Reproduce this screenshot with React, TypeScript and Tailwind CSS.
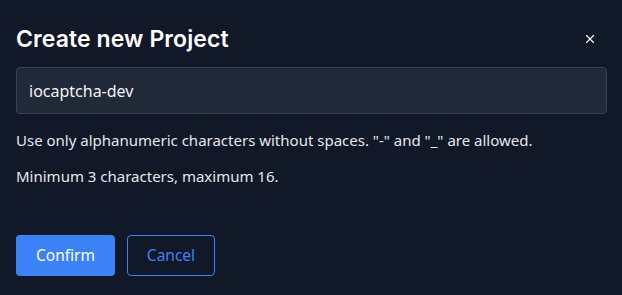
import { X } from "lucide-react";

export default function App() {
  return (
    <div className="flex h-[295px] w-[622px] flex-col bg-[#111827] pl-4 pr-[15px] pt-[26px] font-['Noto_Sans',sans-serif] text-gray-200">
      <div className="flex items-center justify-between">
        <h2 className="font-['Inter',sans-serif] text-[23px] font-semibold leading-[26px] tracking-[0.1px] text-white">
          Create new Project
        </h2>
        <button type="button" aria-label="Close" className="mr-[10px] text-white">
          <X className="size-[14px]" strokeWidth={2} />
        </button>
      </div>

      <input
        defaultValue="iocaptcha-dev"
        className="mt-[15px] h-[47px] w-full rounded border border-[#374151] bg-[#1f2937] px-[12px] text-[16px] text-gray-100 outline-none"
      />

      <p className="mt-[14px] text-[15px] leading-[24px]">
        Use only alphanumeric characters without spaces. "-" and "_" are allowed.
      </p>
      <p className="mt-[12px] text-[15px] leading-[24px]">Minimum 3 characters, maximum 16.</p>

      <div className="mt-[47px] flex gap-3">
        <button
          type="button"
          className="h-[41px] w-[99px] rounded bg-[#3b82f6] text-[15.5px] text-white"
        >
          Confirm
        </button>
        <button
          type="button"
          className="h-[41px] w-[88px] rounded border border-[#3b82f6] text-[15.5px] text-[#3b82f6]"
        >
          Cancel
        </button>
      </div>
    </div>
  );
}
